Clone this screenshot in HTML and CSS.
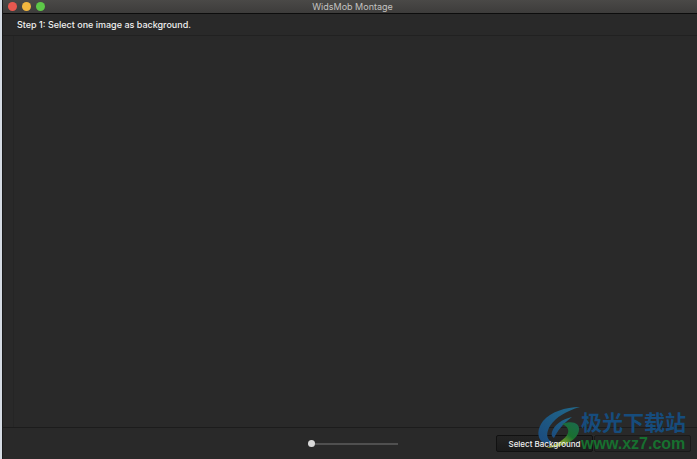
FILE: index.html
```html
<!DOCTYPE html>
<html lang="en">
<head>
<meta charset="utf-8">
<title>WidsMob Montage</title>
<link rel="stylesheet" href="styles.css">
</head>
<body>
<div class="window">
  <header class="titlebar">
    <div class="lights">
      <button class="light close" aria-label="Close"></button>
      <button class="light minimize" aria-label="Minimize"></button>
      <button class="light expand" aria-label="Zoom"></button>
    </div>
    <h1 class="title">WidsMob Montage</h1>
  </header>
  <div class="step">Step 1: Select one image as background.</div>
  <main class="canvas"></main>
  <footer class="toolbar">
    <input class="zoom" type="range" min="0" max="100" value="0" aria-label="Thumbnail size">
    <div class="actions">
      <button class="action"><span class="label">Select Background</span></button>
      <button class="action" aria-label="Next" disabled></button>
    </div>
  </footer>
  <div class="watermark">
    <svg class="logo" viewBox="0 0 44 44" aria-hidden="true">
      <defs>
        <linearGradient id="blue" x1="0" y1="1" x2="1" y2="0">
          <stop offset="0" stop-color="#1b4a7c"/>
          <stop offset="1" stop-color="#216a8c"/>
        </linearGradient>
        <linearGradient id="green" x1="0" y1="1" x2="1" y2="0">
          <stop offset="0" stop-color="#a3b52c"/>
          <stop offset="0.35" stop-color="#7f9c2c"/>
          <stop offset="0.6" stop-color="#19702f"/>
          <stop offset="1" stop-color="#1c6950"/>
        </linearGradient>
      </defs>
      <path fill="url(#blue)" d="M43 0C28 0 14 5 6 14C0 22 0 30 5 35C8 37 12 37 15 35C9 32 9 26 13 19C19 10 29 4 43 0Z"/>
      <path fill="url(#blue)" d="M35 10C25 12 17 18 15 25C14 28 15 30 17 31C20 25 25 17 35 10Z"/>
      <path fill="url(#green)" d="M25 17C35 13 43 16 42 23C41 32 29 40 9 41C19 38 29 32 31 26C32 22 30 19 25 17Z"/>
    </svg>
    <div class="mark-text">
      <span class="mark-name" lang="zh">极光下载站</span>
      <span class="mark-url">www.xz7.com</span>
    </div>
  </div>
</div>
</body>
</html>
```
FILE: styles.css
```css
* {
  box-sizing: border-box;
}

body {
  margin: 0;
  background: #d5dce4;
  font-family: Inter, "Liberation Sans", sans-serif;
  color: #f0f0f0;
}

.window {
  position: relative;
  display: flex;
  flex-direction: column;
  min-height: 100vh;
  margin-left: 2px;
  background: #292929;
  border-left: 1px solid #1b1b1b;
}

.titlebar {
  display: grid;
  grid-template-columns: 1fr auto 1fr;
  align-items: center;
  height: 14px;
  padding: 0 0 0 5px;
  background: linear-gradient(#4a4947, #3d3c3b);
  border-bottom: 1px solid #0c0c0c;
}

.lights {
  display: flex;
  gap: 5px;
}

.light {
  width: 9px;
  height: 9px;
  padding: 0;
  border: 0;
  border-radius: 50%;
}

.close {
  background: #e9584f;
}

.minimize {
  background: #f2b73f;
}

.expand {
  background: #5dc848;
}

.title {
  margin: 0;
  font-size: 9px;
  line-height: 12px;
  font-weight: 400;
  color: #c4c3c1;
}

.step {
  height: 22px;
  padding: 0 14px;
  font-size: 9px;
  line-height: 21px;
  font-weight: 500;
  border-bottom: 1px solid #212121;
}

.canvas {
  flex: 1;
  margin-left: 10px;
  border-left: 1px solid #252525;
}

.toolbar {
  display: grid;
  grid-template-columns: 1fr 90px 1fr;
  align-items: center;
  height: 32px;
  padding: 0 6px 0 12px;
  border-top: 1px solid #1c1c1c;
}

.zoom {
  grid-column: 2;
  width: 100%;
  height: 8px;
  margin: 0;
  appearance: none;
  background: linear-gradient(#505050, #505050) center / 100% 2px no-repeat;
}

.zoom::-webkit-slider-thumb {
  appearance: none;
  width: 7px;
  height: 7px;
  border-radius: 50%;
  background: #d8d8d8;
}

.actions {
  display: flex;
  justify-content: flex-end;
  gap: 1px;
}

.action {
  width: 97px;
  height: 17px;
  padding: 0;
  font: 500 8px/14px Inter, "Liberation Sans", sans-serif;
  white-space: nowrap;
  color: #f0f0f0;
  background: linear-gradient(#242424, #1b1b1b);
  border: 1px solid #111;
  border-radius: 2px;
}

.action:disabled {
  background: #252525;
  border-color: #1a1a1a;
}

.label {
  position: relative;
  z-index: 2;
}

.watermark {
  position: absolute;
  z-index: 1;
  right: 11px;
  bottom: 7px;
  display: flex;
  align-items: center;
  pointer-events: none;
}

.logo {
  width: 44px;
  height: 44px;
}

.mark-text {
  display: flex;
  flex-direction: column;
}

.mark-name {
  font: 700 21px/30px "Noto Sans CJK SC", sans-serif;
  color: #164c7d;
}

.mark-url {
  font: 700 16px/16px "Liberation Sans", sans-serif;
  color: #17702f;
}
```
